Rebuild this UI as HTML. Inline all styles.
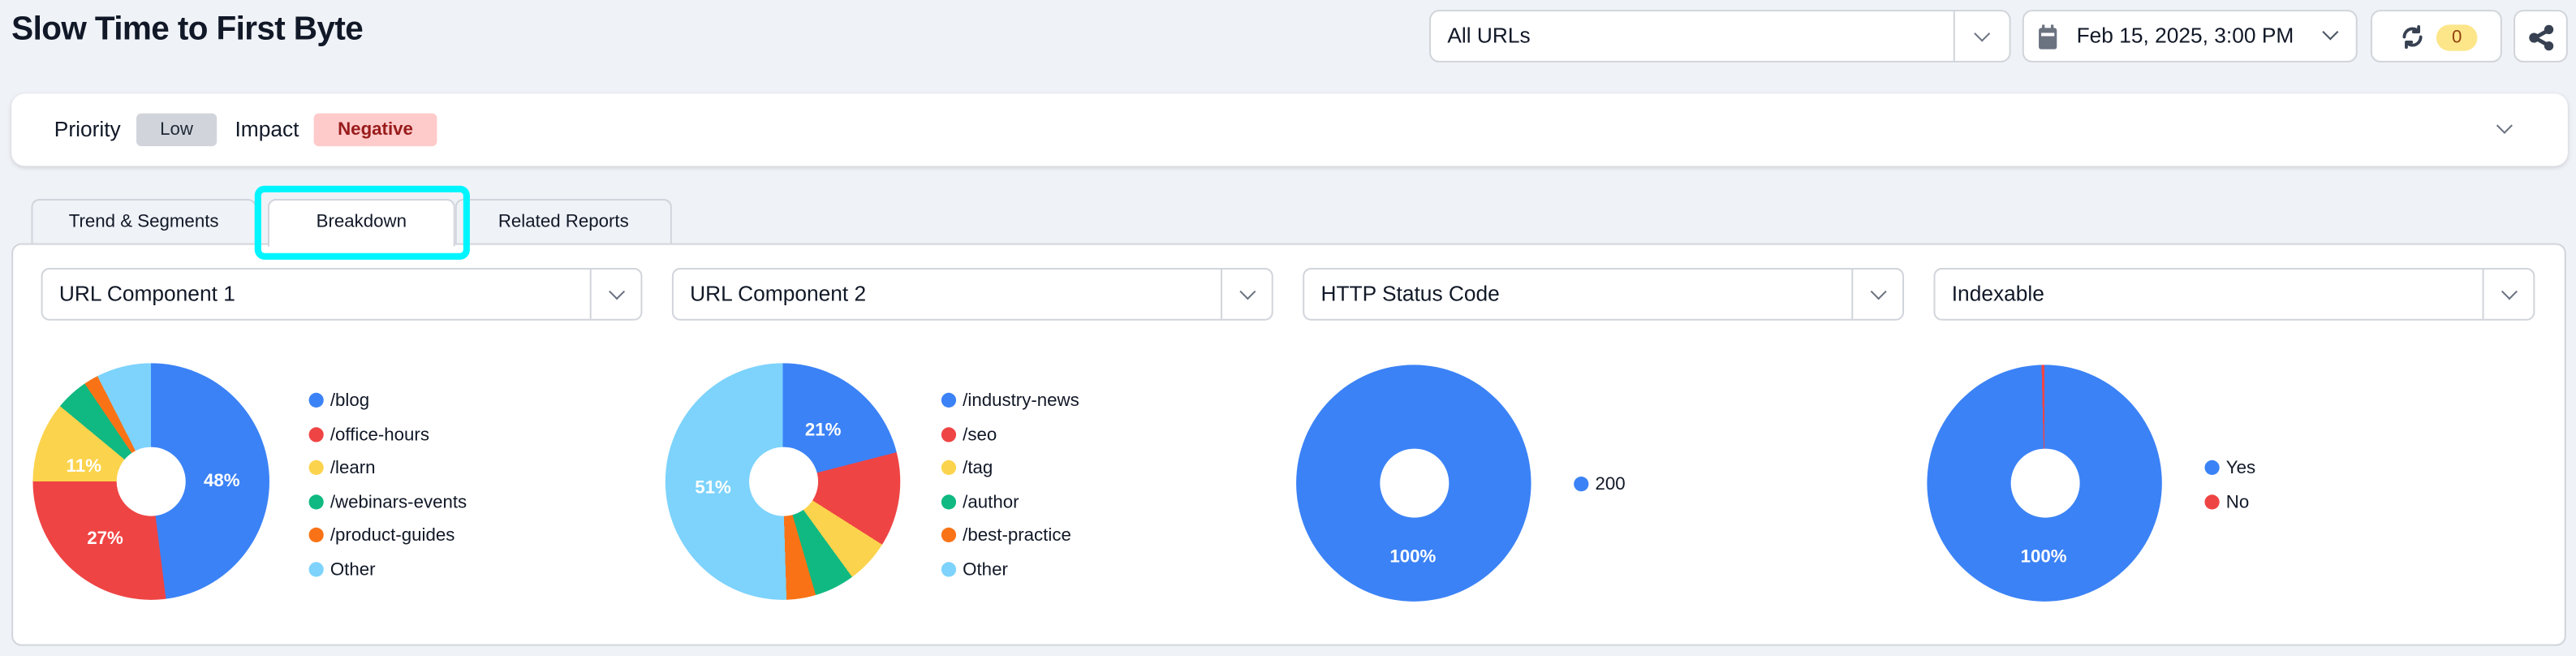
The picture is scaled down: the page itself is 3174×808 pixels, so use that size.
<!DOCTYPE html>
<html><head><meta charset="utf-8"><style>
*{box-sizing:border-box;margin:0;padding:0}
html,body{width:3174px;height:808px;overflow:hidden;background:#eff2f7}
#w{position:absolute;left:0;top:0;width:1568px;height:399px;transform:scale(2.0242);transform-origin:0 0;font-family:"Liberation Sans",sans-serif;color:#111827}
.a{position:absolute}
.box{position:absolute;background:#fff;border:1px solid #d1d5db;border-radius:6px}
.chev{position:absolute;width:7px;height:7px;border-right:1.6px solid #6b7280;border-bottom:1.6px solid #6b7280;transform:rotate(45deg)}
.sel{position:absolute;background:#fff;border:1px solid #d1d5db;border-radius:5px;height:32px;font-size:13px;line-height:30px;padding-left:10px;color:#111827}
.sel .d{position:absolute;right:30px;top:0;bottom:0;border-left:1px solid #d1d5db}
.sel .chev{right:11px;top:10px}
.pie{position:absolute;border-radius:50%}
.pie::after{content:"";position:absolute;left:50%;top:50%;width:42px;height:42px;margin:-21px 0 0 -21px;background:#fff;border-radius:50%}
.lbl{position:absolute;color:#fff;font-weight:bold;font-size:11px;transform:translate(-50%,-50%);z-index:2}
.lg{position:absolute;font-size:11px;line-height:14px;color:#111827}
.lg div{height:20.6px;position:relative;padding-left:13px}
.lg i{position:absolute;left:0;top:2px;width:9px;height:9px;border-radius:50%}
.tab{position:absolute;top:121px;height:28px;border:1px solid #d1d5db;border-bottom:none;border-radius:5px 5px 0 0;background:#eff2f7;font-size:11px;line-height:27px;text-align:center;color:#111827}
</style></head><body><div id="w">
<div class="a" style="left:7px;top:7px;font-size:20px;font-weight:bold;letter-spacing:-0.3px">Slow Time to First Byte</div>

<div class="sel" style="left:870px;top:6px;width:354px;height:32px;border-radius:6px;font-size:13px">All URLs<span class="d" style="right:33px"></span><span class="chev" style="right:13px"></span></div>
<div class="box" style="left:1231px;top:6px;width:204px;height:32px">
 <svg class="a" style="left:9px;top:8px" width="12" height="15" viewBox="0 0 12 15"><rect x="0" y="2" width="11" height="13" rx="1.5" fill="#6b7280"/><rect x="2" y="0" width="1.6" height="3" fill="#6b7280"/><rect x="7.4" y="0" width="1.6" height="3" fill="#6b7280"/><rect x="1.5" y="5" width="8" height="2" fill="#fff"/></svg>
 <div class="a" style="left:32px;top:0;font-size:13px;line-height:30px">Feb 15, 2025, 3:00 PM</div>
 <span class="chev" style="right:12px;top:9px;border-color:#4b5563"></span>
</div>
<div class="box" style="left:1443px;top:6px;width:80px;height:32px">
 <svg class="a" style="left:17px;top:8px" width="15" height="15" viewBox="0 0 24 24" fill="none" stroke="#374151" stroke-width="3" stroke-linecap="round" stroke-linejoin="round"><path d="M4 12a8 8 0 0 1 13.5-5.8"/><path d="M18 2v5h-5"/><path d="M20 12a8 8 0 0 1-13.5 5.8"/><path d="M6 22v-5h5"/></svg>
 <div class="a" style="left:39px;top:8px;width:25px;height:16px;border-radius:8px;background:#fde68a;color:#92400e;font-size:11px;line-height:16px;text-align:center">0</div>
</div>
<div class="box" style="left:1530px;top:6px;width:33px;height:32px">
 <svg class="a" style="left:8px;top:8px" width="16" height="16" viewBox="0 0 16 16"><path d="M4 8L12 3.5M4 8L12 12.5" stroke="#374151" stroke-width="2.4"/><circle cx="3.5" cy="8" r="3" fill="#374151"/><circle cx="12.5" cy="3" r="2.8" fill="#374151"/><circle cx="12.5" cy="13" r="2.8" fill="#374151"/></svg>
</div>

<div class="a" style="left:7px;top:57px;width:1556px;height:44px;background:#fff;border-radius:8px;box-shadow:0 1px 3px rgba(0,0,0,.15)">
 <div class="a" style="left:26px;top:14px;font-size:13px">Priority</div>
 <div class="a" style="left:76px;top:12px;width:49px;height:20px;border-radius:3px;background:#d1d5db;font-size:11px;line-height:20px;text-align:center;color:#1f2937">Low</div>
 <div class="a" style="left:136px;top:14px;font-size:13px">Impact</div>
 <div class="a" style="left:184px;top:12px;width:75px;height:20px;border-radius:3px;background:#fecaca;font-size:11px;line-height:20px;text-align:center;color:#991b1b;font-weight:bold">Negative</div>
 <span class="chev" style="left:1514px;top:16px"></span>
</div>

<div class="tab" style="left:19px;width:137px">Trend &amp; Segments</div>
<div class="tab" style="left:277px;width:132px">Related Reports</div>
<div class="a" style="left:7px;top:148px;width:1555px;height:245px;background:#fff;border:1px solid #d1d5db;border-radius:6px"></div>
<div class="tab" style="left:163px;width:114px;height:29px;background:#fff;z-index:3">Breakdown</div>
<div class="a" style="left:155px;top:113px;width:131px;height:45px;border:4px solid #00f5ff;border-radius:6px;z-index:4"></div>

<div class="sel" style="left:25px;top:163px;width:366px">URL Component 1<span class="d"></span><span class="chev"></span></div>
<div class="sel" style="left:409px;top:163px;width:366px">URL Component 2<span class="d"></span><span class="chev"></span></div>
<div class="sel" style="left:793px;top:163px;width:366px">HTTP Status Code<span class="d"></span><span class="chev"></span></div>
<div class="sel" style="left:1177px;top:163px;width:366px">Indexable<span class="d"></span><span class="chev"></span></div>

<div class="pie" style="left:20px;top:221px;width:144px;height:144px;background:conic-gradient(#3b82f6 0 48%,#ef4444 0 75%,#fcd34d 0 86%,#10b981 0 90.5%,#f97316 0 92.5%,#7dd3fc 0 100%)"></div>
<div class="lbl" style="left:135px;top:293px">48%</div>
<div class="lbl" style="left:64px;top:328px">27%</div>
<div class="lbl" style="left:51px;top:284px">11%</div>
<div class="lg" style="left:188px;top:237px"><div><i style="background:#3b82f6"></i>/blog</div><div><i style="background:#ef4444"></i>/office-hours</div><div><i style="background:#fcd34d"></i>/learn</div><div><i style="background:#10b981"></i>/webinars-events</div><div><i style="background:#f97316"></i>/product-guides</div><div><i style="background:#7dd3fc"></i>Other</div></div>

<div class="pie" style="left:405px;top:221px;width:143px;height:144px;background:conic-gradient(#3b82f6 0 21%,#ef4444 0 34%,#fcd34d 0 40%,#10b981 0 45.5%,#f97316 0 49.5%,#7dd3fc 0 100%)"></div>
<div class="lbl" style="left:501px;top:262px">21%</div>
<div class="lbl" style="left:434px;top:297px">51%</div>
<div class="lg" style="left:573px;top:237px"><div><i style="background:#3b82f6"></i>/industry-news</div><div><i style="background:#ef4444"></i>/seo</div><div><i style="background:#fcd34d"></i>/tag</div><div><i style="background:#10b981"></i>/author</div><div><i style="background:#f97316"></i>/best-practice</div><div><i style="background:#7dd3fc"></i>Other</div></div>

<div class="pie" style="left:789px;top:222px;width:143px;height:144px;background:#3b82f6"></div>
<div class="lbl" style="left:860px;top:339px">100%</div>
<div class="lg" style="left:958px;top:288px"><div><i style="background:#3b82f6"></i>200</div></div>

<div class="pie" style="left:1173px;top:222px;width:143px;height:144px;background:conic-gradient(#3b82f6 0 99.6%,#ef4444 0 100%)"></div>
<div class="lbl" style="left:1244px;top:339px">100%</div>
<div class="lg" style="left:1342px;top:278px"><div><i style="background:#3b82f6"></i>Yes</div><div><i style="background:#ef4444"></i>No</div></div>
</div></body></html>
